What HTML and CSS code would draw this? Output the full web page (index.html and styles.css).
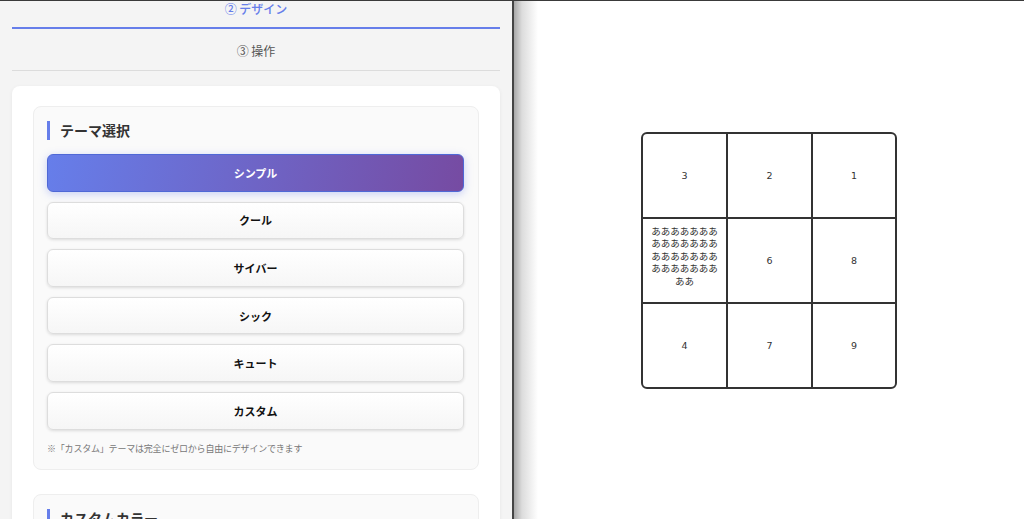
FILE: index.html
```html
<!DOCTYPE html>
<html lang="ja">
<head>
<meta charset="utf-8">
<title>デザイン</title>
<link rel="stylesheet" href="styles.css">
</head>
<body>
<div class="app">
  <aside class="panel">
    <div class="panel-inner">
      <nav class="tabs">
        <div class="tab tab-active">② デザイン</div>
        <div class="tab">③ 操作</div>
      </nav>
      <div class="card">
        <section class="section">
          <h2 class="section-title">テーマ選択</h2>
          <div class="theme-list">
            <button class="theme-btn theme-btn-active">シンプル</button>
            <button class="theme-btn">クール</button>
            <button class="theme-btn">サイバー</button>
            <button class="theme-btn">シック</button>
            <button class="theme-btn">キュート</button>
            <button class="theme-btn">カスタム</button>
          </div>
          <p class="note">※「カスタム」テーマは完全にゼロから自由にデザインできます</p>
        </section>
        <section class="section">
          <h2 class="section-title">カスタムカラー</h2>
        </section>
      </div>
    </div>
  </aside>
  <div class="divider"></div>
  <main class="preview">
    <div class="grid">
      <div class="cell">3</div>
      <div class="cell">2</div>
      <div class="cell">1</div>
      <div class="cell cell-long">ああああああああああああああああああああああああああああああ</div>
      <div class="cell">6</div>
      <div class="cell">8</div>
      <div class="cell">4</div>
      <div class="cell">7</div>
      <div class="cell">9</div>
    </div>
  </main>
</div>
</body>
</html>
```

FILE: styles.css
```css
* { box-sizing: border-box; }
html, body { margin: 0; padding: 0; height: 100%; }
body {
  font-family: "Noto Sans CJK JP", "Noto Sans", sans-serif;
  background: #fff;
  overflow: hidden;
}
.app {
  display: flex;
  height: 519px;
  border-top: 1px solid #3a3a3a;
}
.panel {
  width: 512px;
  flex: none;
  background: #f4f4f4;
  overflow: hidden;
}
.panel-inner {
  margin-top: -14px;
  padding: 0 12px;
}
.tabs {
  display: flex;
  flex-direction: column;
}
.tab {
  padding: 15px 0 12px;
  line-height: 14px;
  font-size: 12px;
  text-align: center;
  color: #555;
  border-bottom: 1px solid #dcdcdc;
}
.tab-active {
  padding: 15px 0 11px;
  color: #667eea;
  font-weight: 500;
  border-bottom: 2px solid #667eea;
}
.card {
  margin-top: 15px;
  background: #fff;
  border-radius: 8px;
  box-shadow: 0 1px 4px rgba(0,0,0,0.06);
  padding: 20px 21px;
  display: flex;
  flex-direction: column;
  gap: 24px;
}
.section {
  background: #fafafa;
  border: 1px solid #eeeeee;
  border-radius: 8px;
  padding: 14px 14px 14px 13px;
}
.section-title {
  margin: 0;
  font-size: 14px;
  line-height: 19px;
  font-weight: 700;
  color: #333;
  border-left: 3px solid #667eea;
  padding-left: 10px;
}
.theme-list {
  margin-top: 14px;
  display: flex;
  flex-direction: column;
  gap: 10px;
}
.theme-btn {
  height: 37.6px;
  display: flex;
  align-items: center;
  justify-content: center;
  font-family: "Noto Sans CJK JP", sans-serif;
  font-size: 11px;
  font-weight: 700;
  color: #111;
  background: linear-gradient(180deg, #ffffff, #f6f6f6);
  border: 1px solid #dddddd;
  border-radius: 6px;
  box-shadow: 0 1px 3px rgba(0,0,0,0.12);
  padding: 0;
}
.theme-btn-active {
  color: #fff;
  background: linear-gradient(100deg, #667eea, #764ba2);
  border: 1px solid #4f68d6;
  box-shadow: 0 2px 8px rgba(102,126,234,0.35);
}
.note {
  margin: 13px 0 0;
  font-size: 9px;
  line-height: 12px;
  letter-spacing: -0.2px;
  color: #777;
}
.divider {
  width: 2px;
  flex: none;
  background: #444;
}
.preview {
  flex: 1;
  display: flex;
  align-items: center;
  justify-content: center;
  background: linear-gradient(90deg, #a8a8a8 0, #dcdcdc 8px, #ffffff 24px);
}
.grid {
  display: grid;
  grid-template-columns: 83px 83px 82px;
  grid-template-rows: 83px 83px 83px;
  gap: 2px;
  background: #333;
  border: 2px solid #333;
  border-radius: 6px;
  overflow: hidden;
}
.cell {
  background: #fff;
  display: flex;
  align-items: center;
  justify-content: center;
  text-align: center;
  padding: 3px 5px 0;
  font-family: "DejaVu Sans", "Noto Sans CJK JP", sans-serif;
  font-size: 9.5px;
  line-height: 12.5px;
  color: #333;
  word-break: break-all;
}
.cell-long {
  padding: 0 5px 6px;
}
```
